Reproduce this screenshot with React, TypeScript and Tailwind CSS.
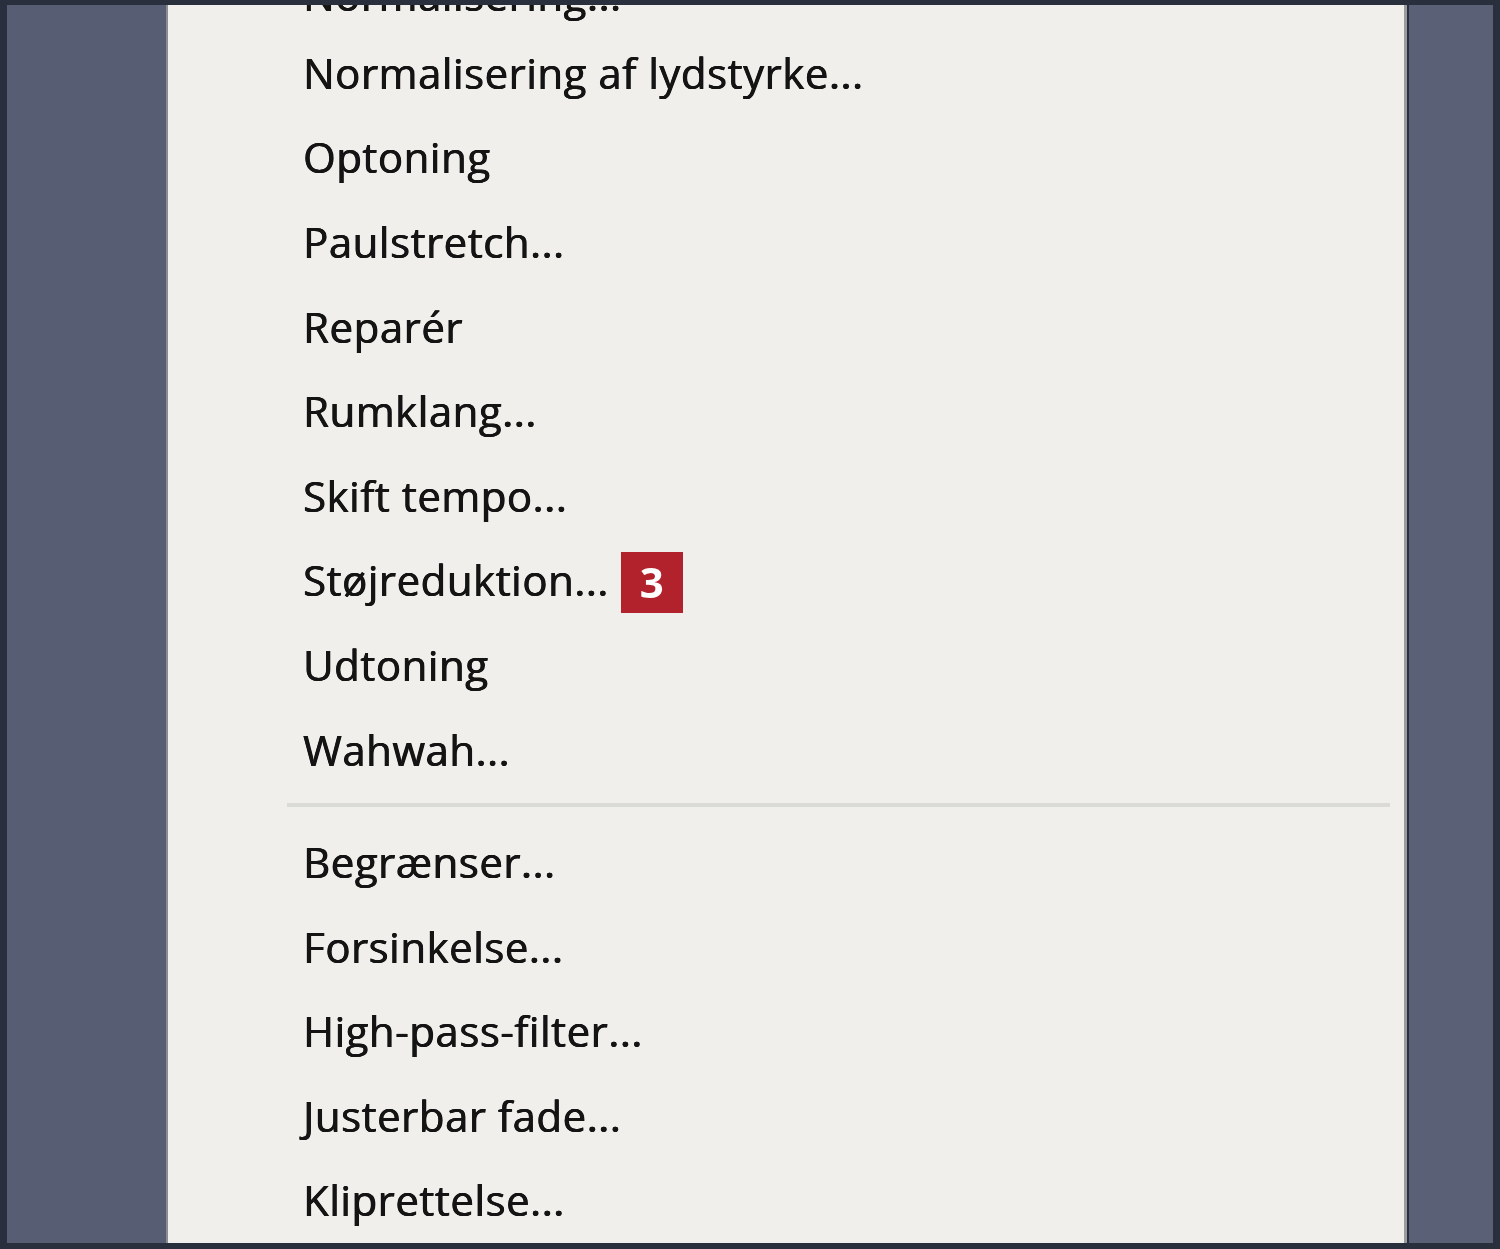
import React from "react";

const groupA = [
  "Normalisering af lydstyrke...",
  "Optoning",
  "Paulstretch...",
  "Reparér",
  "Rumklang...",
  "Skift tempo...",
  "Støjreduktion...",
  "Udtoning",
  "Wahwah...",
];
const groupB = [
  "Begrænser...",
  "Forsinkelse...",
  "High-pass-filter...",
  "Justerbar fade...",
  "Kliprettelse...",
];

function Label({ label }: { label: string }) {
  return (
    <span className="text-[42px] leading-none font-medium text-[#141414] tracking-[0.5px] [font-family:'Open_Sans',sans-serif] blur-[0.5px] [text-shadow:0.5px_0_0.6px_#141414,-0.3px_0_0.6px_#141414]">
      {label}
    </span>
  );
}

function Item({ label }: { label: string }) {
  return (
    <div className="h-[84.6px] shrink-0 flex items-center pl-[135px]">
      <Label label={label} />
      {label === "Støjreduktion..." && (
        <span className="ml-[12px] w-[62px] h-[61px] bg-[#b1222c] flex items-center justify-center text-white font-bold text-[42px] leading-none [font-family:'Open_Sans',sans-serif] mt-[4px] blur-[0.4px]">
          3
        </span>
      )}
    </div>
  );
}

export default function App() {
  return (
    <div className="w-[1500px] h-[1249px] bg-[#2a2f3d] pt-[5px] pb-[6px] pl-[7px] pr-[7px] flex overflow-hidden">
      <div className="w-[159px] h-full bg-[#575d72] shrink-0" />
      <div className="w-[2px] h-full bg-[#8a8d93] shrink-0" />
      <div className="flex-1 h-full bg-[#f0efeb] overflow-hidden flex flex-col">
        <div className="-mt-[46px] flex flex-col">
          <div className="h-[71.6px] shrink-0 flex items-center pl-[135px]">
            <Label label="Normalisering..." />
          </div>
          {groupA.map((l) => (
            <Item key={l} label={l} />
          ))}
          <div className="h-[27.8px] shrink-0 flex flex-col">
            <div className="h-[11px]" />
            <div className="ml-[119px] mr-[14px] h-[4px] bg-[#dadad6] blur-[0.5px]" />
          </div>
          {groupB.map((l) => (
            <Item key={l} label={l} />
          ))}
        </div>
      </div>
      <div className="w-[3px] h-full bg-[#9a9b9c] shrink-0" />
      <div className="w-[2px] h-full bg-[#2b3040] shrink-0" />
      <div className="flex-1 max-w-[84px] h-full bg-[#5a6075] shrink-0" />
    </div>
  );
}
